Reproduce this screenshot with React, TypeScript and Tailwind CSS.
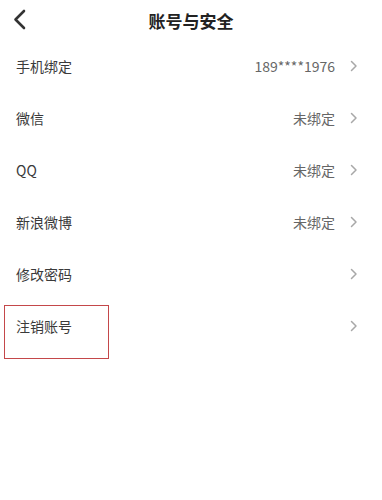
import React from 'react'

const ROWS: { label: string; value?: string }[] = [
  { label: '手机绑定', value: '189****1976' },
  { label: '微信', value: '未绑定' },
  { label: 'QQ', value: '未绑定' },
  { label: '新浪微博', value: '未绑定' },
  { label: '修改密码' },
  { label: '注销账号' },
]

function Chevron() {
  return (
    <svg width="8" height="12" viewBox="0 0 8 12" className="shrink-0">
      <polyline points="1.5,1.5 6,6 1.5,10.5" fill="none" stroke="#a8a8a8" strokeWidth="1.5" strokeLinecap="round" strokeLinejoin="round" />
    </svg>
  )
}

export default function App() {
  return (
    <div
      className="w-[382px] h-[500px] bg-white text-[#333]"
      style={{ fontFamily: '"Noto Sans CJK SC", "Noto Sans", sans-serif' }}
    >
      {/* header */}
      <div className="relative h-[40px] flex items-center justify-center">
        <button type="button" className="absolute left-[12px] top-[9px]">
          <svg width="16" height="22" viewBox="0 0 16 22">
            <polyline points="12,2 3.5,10.5 12,19" fill="none" stroke="#333" strokeWidth="2.6" strokeLinecap="round" strokeLinejoin="round" />
          </svg>
        </button>
        <h1 className="text-[17px] font-bold text-[#222] leading-none">账号与安全</h1>
      </div>

      {/* list */}
      <div>
        {ROWS.map((r, i) => (
          <div key={r.label} className="relative h-[52px] flex items-center pl-4 pr-[24px]">
            <span className="text-[14px] text-[#3a3a3a] flex-1">{r.label}</span>
            {r.value && <span className="text-[14px] text-[#666] mr-[15px]">{r.value}</span>}
            <Chevron />
            {i === ROWS.length - 1 && (
              <div className="absolute left-[4px] top-[5px] w-[105px] h-[54px] border border-[#c4474a]" />
            )}
          </div>
        ))}
      </div>
    </div>
  )
}
